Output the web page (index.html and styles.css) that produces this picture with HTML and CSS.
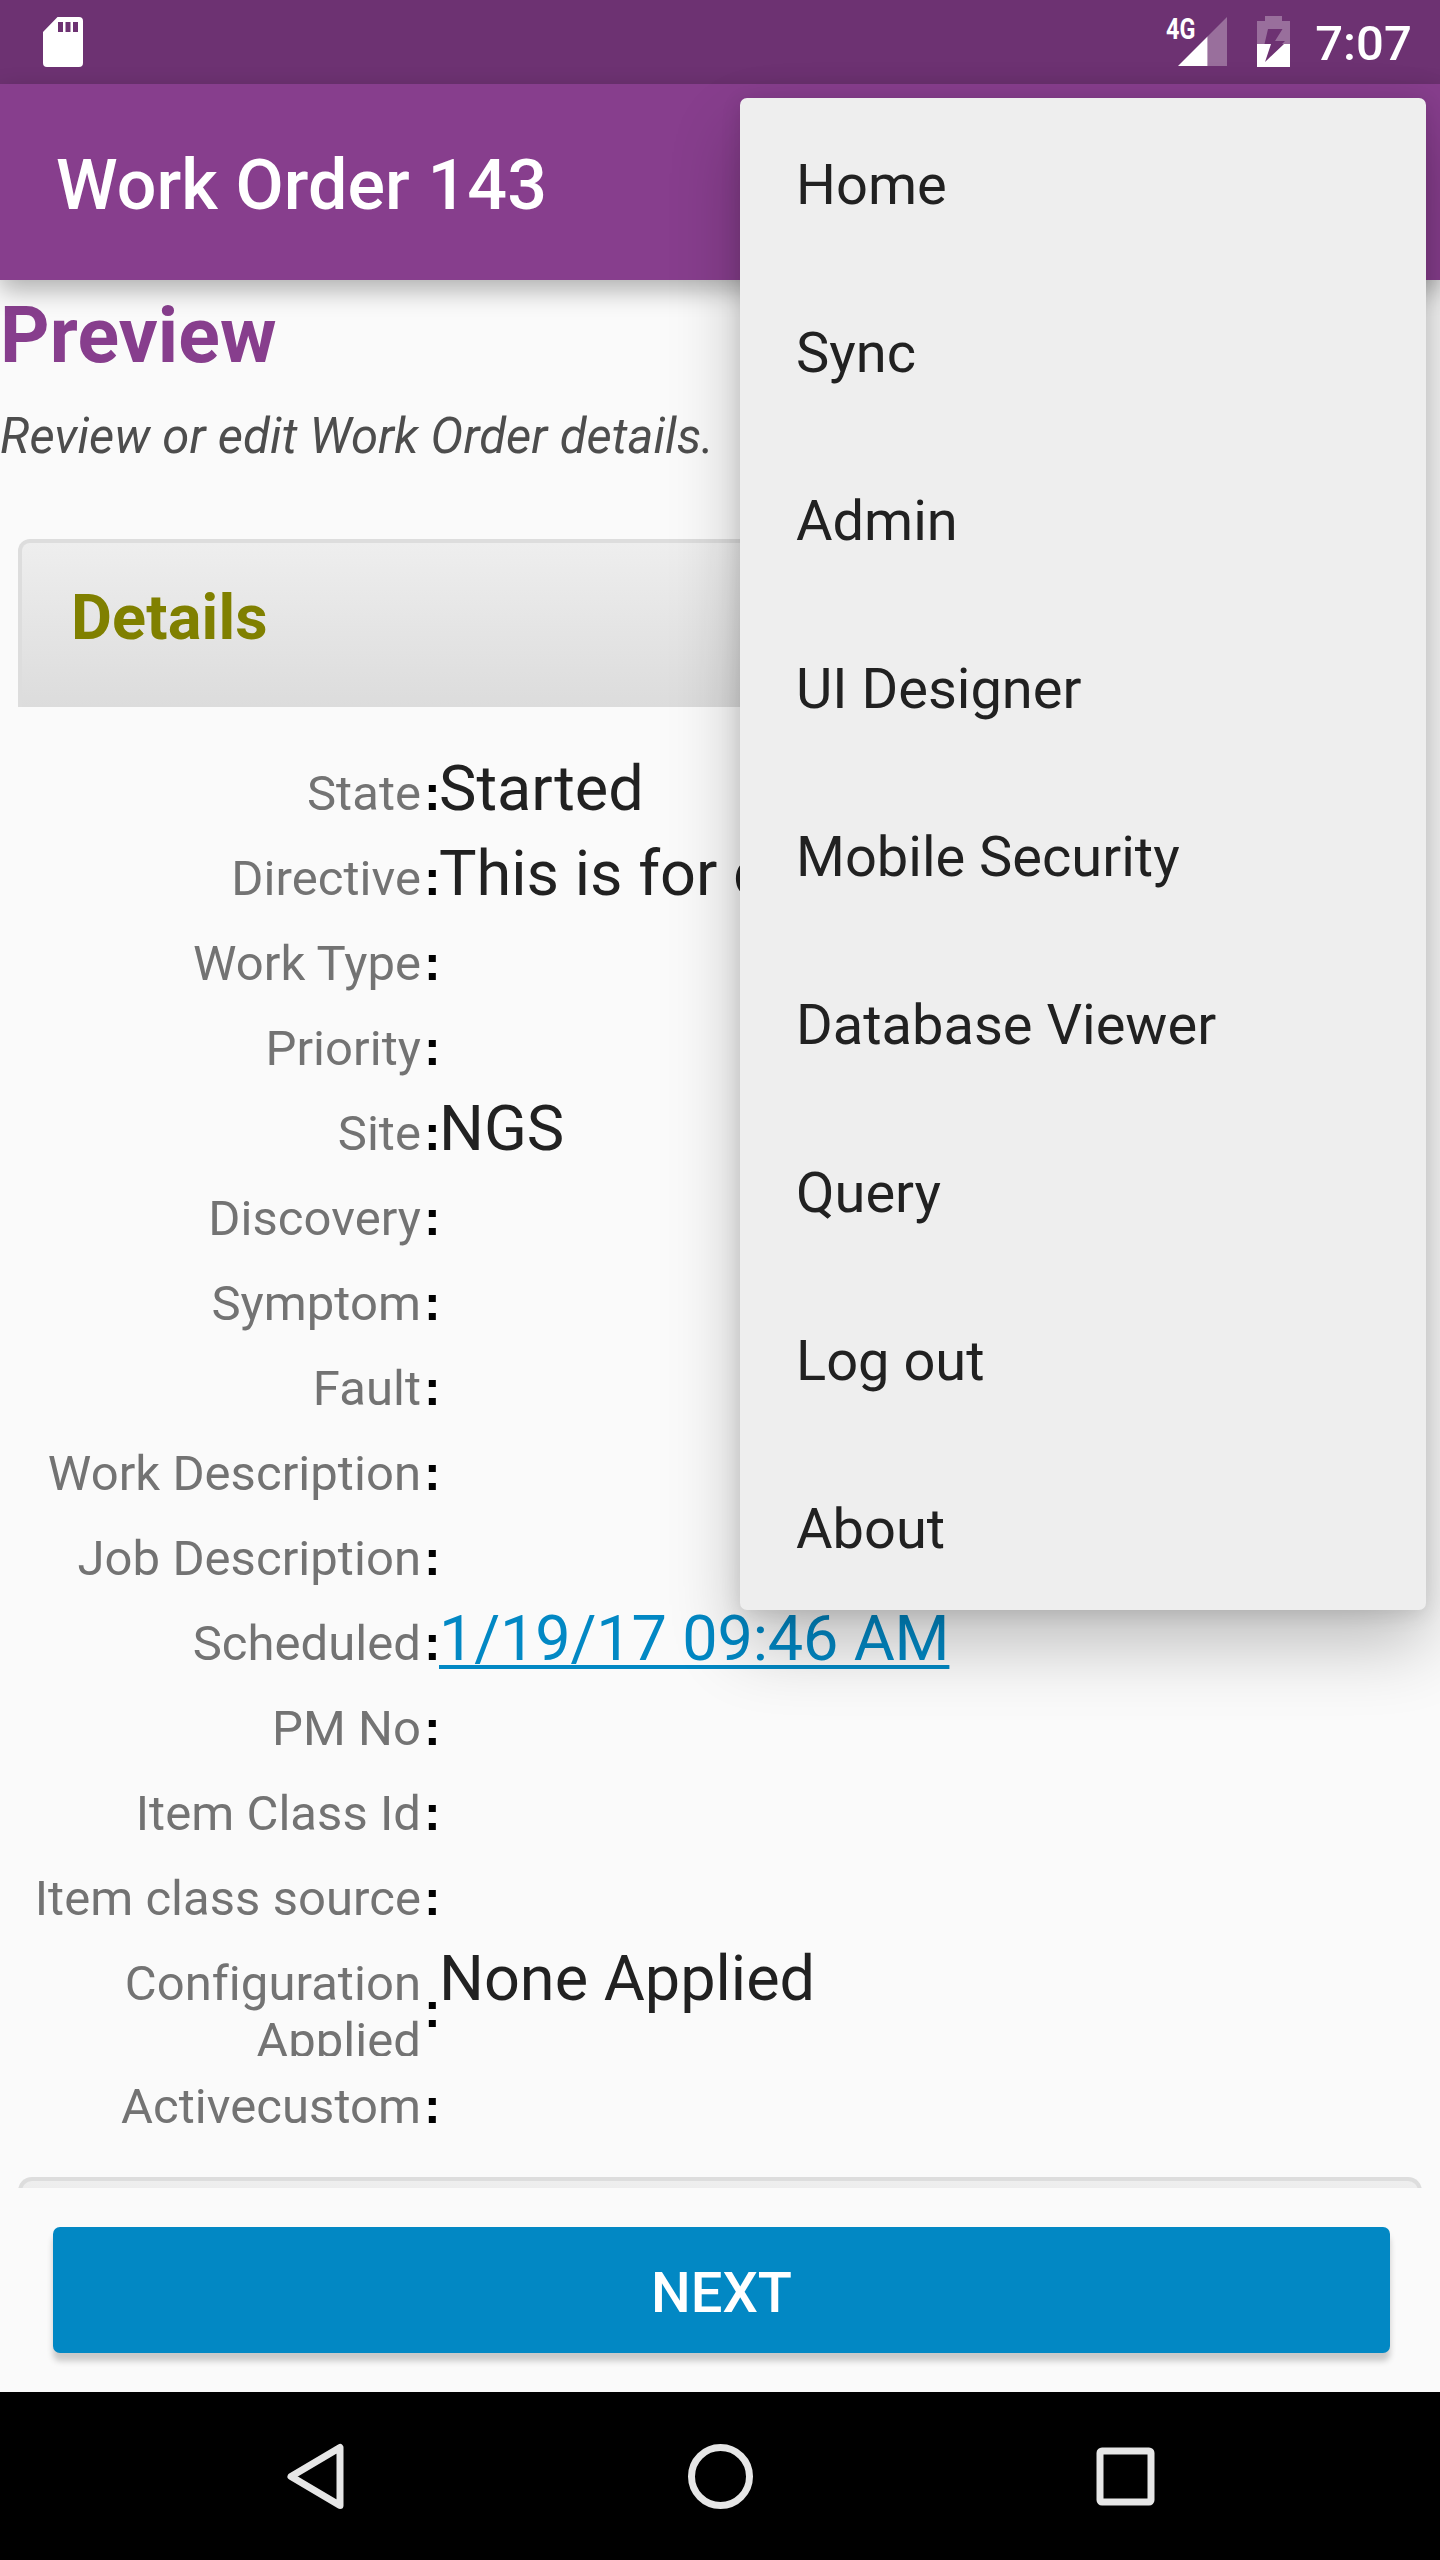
FILE: index.html
```html
<!DOCTYPE html>
<html lang="en">
<head>
<meta charset="utf-8">
<title>Work Order 143</title>
<link rel="stylesheet" href="styles.css">
</head>
<body>
<div class="screen">
  <header class="status">
    <svg class="status-sd" width="40" height="50" viewBox="0 0 40 50"><path fill="#fff" fill-rule="evenodd" d="M14.500 0H36a4 4 0 0 1 4 4V46a4 4 0 0 1-4 4H4a4 4 0 0 1-4-4V15zM15 5V15H20V5zM22.500 5V15H27.500V5zM30 5V15H35V5z"/></svg>
    <div class="status-right">
      <span class="net">4G</span>
      <svg class="signal" width="49" height="49" viewBox="0 0 49 49"><path fill="#fff" fill-opacity=".3" d="M29.500 19.500L49 0V49H29.500z"/><path fill="#fff" d="M0 49L29.500 19.500V49z"/></svg>
      <svg class="battery" width="33" height="51" viewBox="0 0 33 51"><path fill="#fff" fill-opacity=".3" fill-rule="evenodd" d="M8 0H25V5H33V28H25L28 25H18L25.500 13H11L7.500 28H0V5H8z"/><path fill="#fff" d="M0 28H14L8 46L27 28H33V51H0z"/></svg>
      <span class="clock">7:07</span>
    </div>
  </header>
  <div class="appbar"><h1 class="appbar-title">Work Order 143</h1></div>
  <main class="content">
    <h2 class="page-title">Preview</h2>
    <p class="page-hint">Review or edit Work Order details.</p>
    <section class="panel"><h3 class="panel-title">Details</h3></section>
    <div class="fields">
      <div class="row"><span class="label">State</span><span class="colon">:</span><span class="value">Started</span></div>
      <div class="row"><span class="label">Directive</span><span class="colon">:</span><span class="value">This is for d</span></div>
      <div class="row"><span class="label">Work Type</span><span class="colon">:</span></div>
      <div class="row"><span class="label">Priority</span><span class="colon">:</span></div>
      <div class="row"><span class="label">Site</span><span class="colon">:</span><span class="value">NGS</span></div>
      <div class="row"><span class="label">Discovery</span><span class="colon">:</span></div>
      <div class="row"><span class="label">Symptom</span><span class="colon">:</span></div>
      <div class="row"><span class="label">Fault</span><span class="colon">:</span></div>
      <div class="row"><span class="label">Work Description</span><span class="colon">:</span></div>
      <div class="row"><span class="label">Job Description</span><span class="colon">:</span></div>
      <div class="row"><span class="label">Scheduled</span><span class="colon">:</span><a class="value link">1/19/17 09:46 AM</a></div>
      <div class="row"><span class="label">PM No</span><span class="colon">:</span></div>
      <div class="row"><span class="label">Item Class Id</span><span class="colon">:</span></div>
      <div class="row"><span class="label">Item class source</span><span class="colon">:</span></div>
      <div class="row row-tall"><span class="label">Configuration<br>Applied</span><span class="colon">:</span><span class="value">None Applied</span></div>
      <div class="row"><span class="label">Activecustom</span><span class="colon">:</span></div>
    </div>
    <section class="panel panel-next"></section>
  </main>
  <footer class="actions"><button class="next">NEXT</button></footer>
  <nav class="navbar">
    <svg width="70" height="70" viewBox="0 0 70 70"><path fill="none" stroke="#e6e6e6" stroke-width="7" stroke-linejoin="round" d="M60 6.500V64.500L11 35.500z"/></svg>
    <svg width="70" height="70" viewBox="0 0 70 70"><circle cx="35.500" cy="35.500" r="29" fill="none" stroke="#e6e6e6" stroke-width="7"/></svg>
    <svg width="70" height="70" viewBox="0 0 70 70"><rect x="10" y="10" width="51" height="51" rx="2" fill="none" stroke="#e6e6e6" stroke-width="7"/></svg>
  </nav>
  <ul class="menu">
    <li>Home</li><li>Sync</li><li>Admin</li><li>UI Designer</li><li>Mobile Security</li><li>Database Viewer</li><li>Query</li><li>Log out</li><li>About</li>
  </ul>
</div>
</body>
</html>
```
FILE: styles.css
```css
* { box-sizing: border-box; }
body { margin: 0; font-family: Roboto, sans-serif; background: #fafafa; }
h1, h2, h3, p, ul { margin: 0; padding: 0; }
.screen { position: relative; width: 1440px; height: 2560px; overflow: hidden; display: flex; flex-direction: column; }
.status { height: 84px; flex: none; background: #6d3272; display: flex; justify-content: space-between; align-items: flex-start; padding: 17px 28px 0 43px; }
.status-right { display: flex; align-items: flex-start; color: #fff; }
.net { font-size: 30px; font-weight: 700; line-height: 24px; width: 12px; white-space: nowrap; transform: scaleX(.78); transform-origin: 0 0; }
.signal { margin-right: 30px; }
.battery { margin-top: -1px; margin-right: 25px; }
.clock { font-size: 49px; font-weight: 500; line-height: 54px; letter-spacing: .1px; }
.appbar { position: relative; height: 196px; flex: none; background: #873e8d; padding: 0 56px; display: flex; align-items: center; box-shadow: 0 10px 24px rgba(0,0,0,.3); }
.appbar-title { color: #fff; font-size: 70px; font-weight: 500; line-height: 82px; padding-top: 6px; letter-spacing: .1px; }
.content { height: 1908px; flex: none; overflow: hidden; }
.page-title { color: #873e8d; font-size: 77px; font-weight: 700; line-height: 90px; margin-top: 11px; letter-spacing: .15px; }
.page-hint { color: #4d4d4d; font-size: 49px; font-style: italic; line-height: 58px; margin-top: 27px; letter-spacing: .09px; }
.panel { height: 168px; margin: 73px 18px 0; border: 4px solid #ddd; border-bottom: 0; border-radius: 12px 12px 0 0; background: linear-gradient(#eee, #dcdcdc); padding: 38px 49px 0; }
.panel-title { color: #808000; font-size: 63px; font-weight: 700; line-height: 74px; letter-spacing: .15px; }
.fields { padding-top: 44px; }
.row { display: grid; grid-template-columns: 421px 18px 1fr; height: 85px; line-height: 57px; }
.label { color: #737373; font-size: 49px; text-align: right; padding-top: 14px; letter-spacing: .05px; }
.colon { color: #000; font: 700 50px/57px "Liberation Sans", sans-serif; padding: 14px 0 0 3px; }
.value { color: #212121; font-size: 63px; line-height: 74px; padding-top: 1px; white-space: nowrap; }
.link { color: #0288c4; text-decoration: underline; text-decoration-thickness: 4px; text-underline-offset: 5px; text-decoration-skip-ink: none; letter-spacing: -.18px; }
.row-tall { height: 123px; }
.row-tall .label { height: 115px; overflow: hidden; }
.row-tall .colon { padding-top: 52px; margin-top: -11px; }
.panel-next { margin-top: 28px; border-radius: 14px 14px 0 0; }
.actions { height: 204px; flex: none; padding: 39px 50px 0 53px; }
.next { display: block; width: 100%; height: 126px; border: 0; border-radius: 7px; background: #0288c4; color: #fff; font: 500 56px/120px Roboto, sans-serif; padding: 5px 0 0; box-shadow: 0 8px 6px rgba(0,0,0,.2); }
.navbar { height: 168px; flex: none; background: #000; display: flex; justify-content: center; align-items: center; gap: 335px; }
.menu { position: absolute; left: 740px; top: 98px; width: 686px; height: 1512px; list-style: none; background: #eee; border-radius: 7px; box-shadow: 0 35px 70px rgba(0,0,0,.24), 0 4px 20px rgba(0,0,0,.12); }
.menu li { height: 168px; line-height: 168px; padding: 3px 56px 0; font-size: 56px; color: #212121; }
```
